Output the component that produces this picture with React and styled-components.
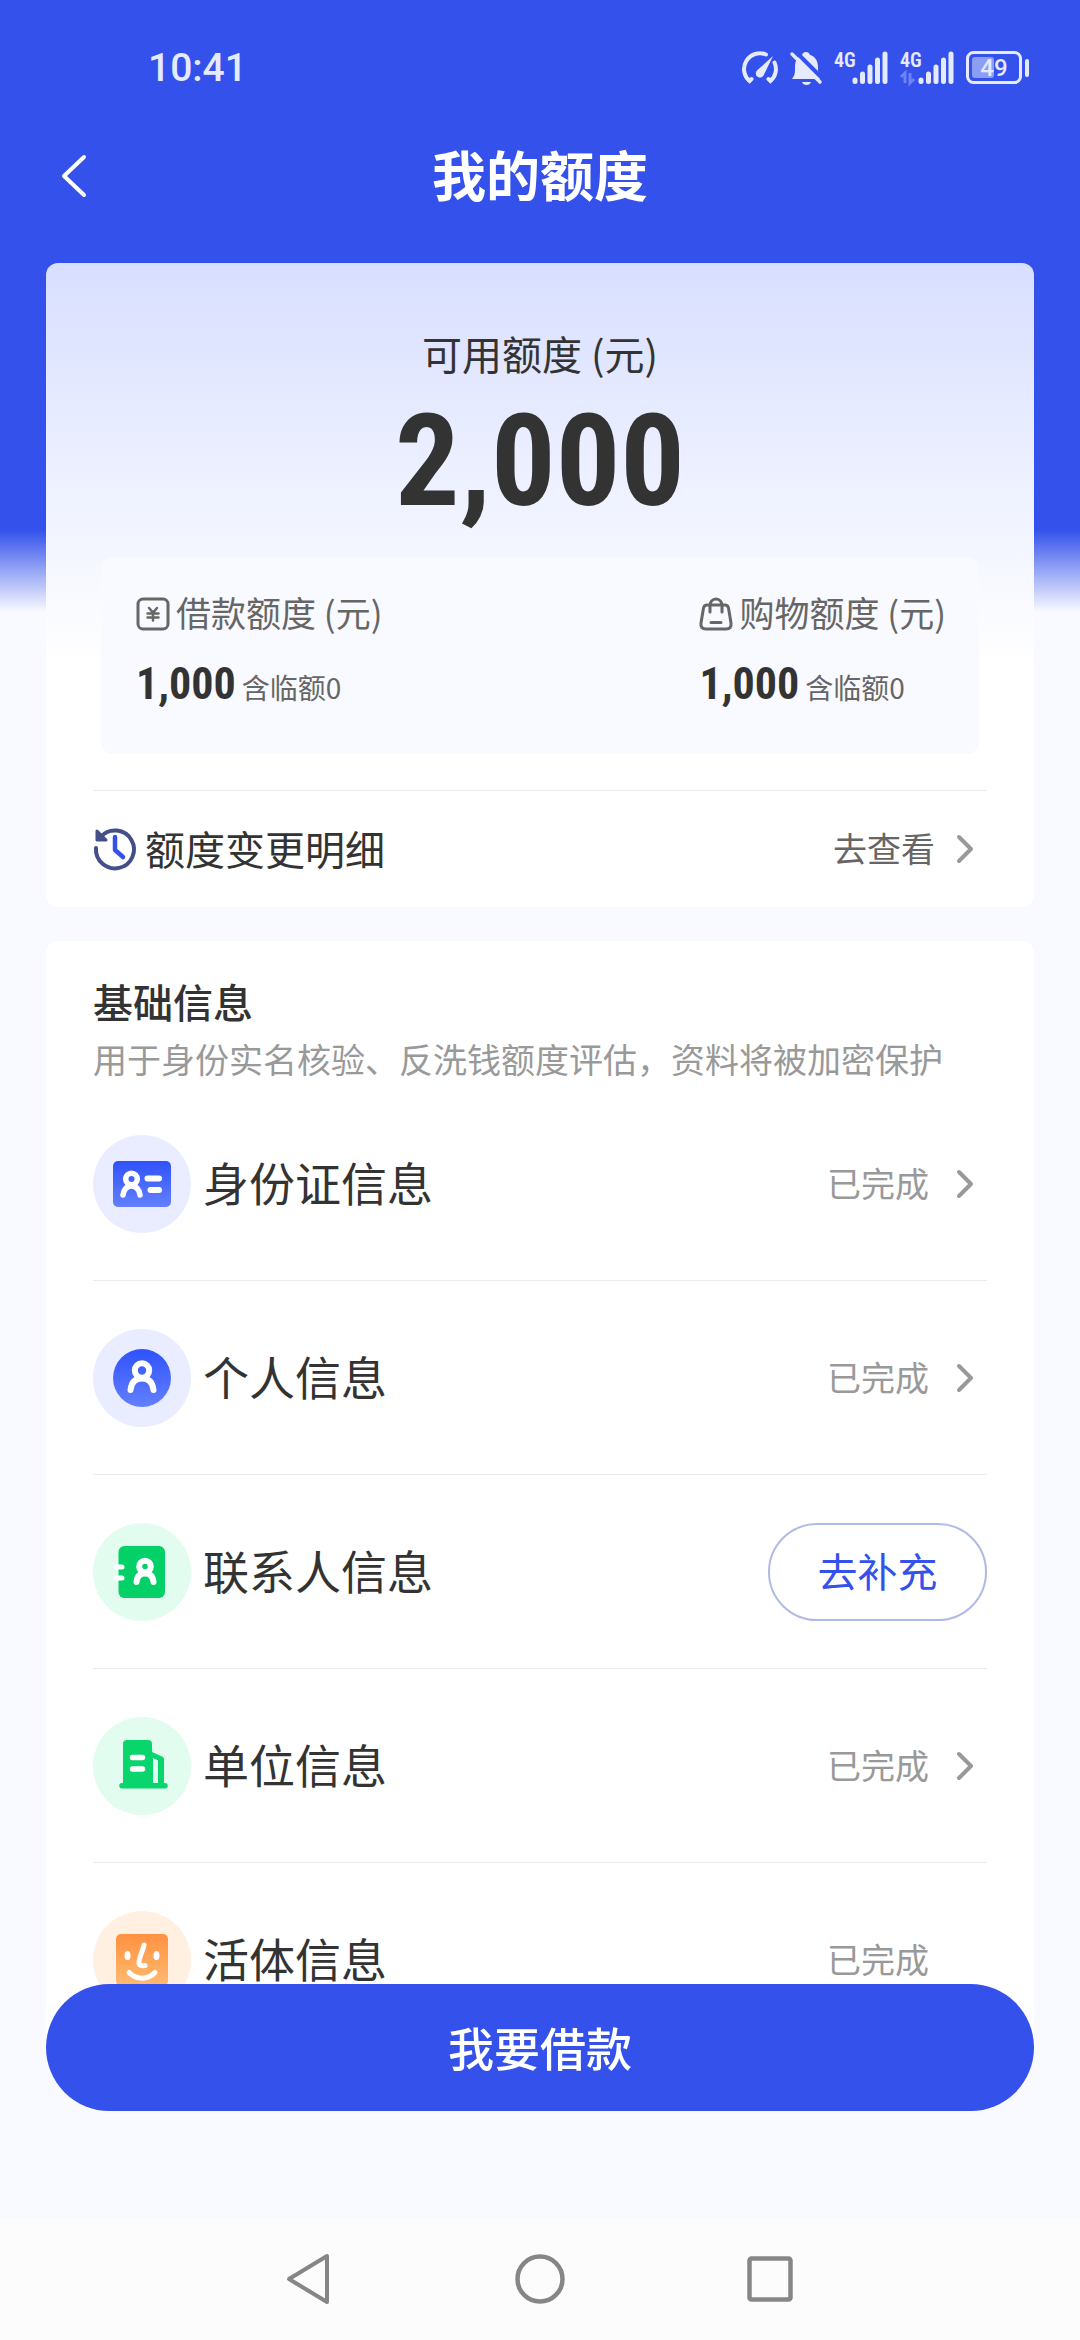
import styled, { createGlobalStyle } from 'styled-components';

const rows = [
  { id: 'idcard', title: '身份证信息', arrow: true },
  { id: 'person', title: '个人信息', arrow: true },
  { id: 'contact', title: '联系人信息', todo: true },
  { id: 'company', title: '单位信息', arrow: true },
  { id: 'face', title: '活体信息', arrow: false },
];

const Signal = ({ data }) => (
  <svg width='54' height='36' viewBox='0 0 54 36'>
    <text
      x='0'
      y='17'
      fill='#e6eaff'
      fontSize='20'
      fontWeight='600'
      fontFamily='Roboto Condensed, Liberation Sans Narrow, Roboto, sans-serif'
    >
      4G
    </text>
    {data && (
      <path
        d='M1 27l4-4v10M10 23v10l4-4'
        fill='none'
        stroke='#6d82f4'
        strokeWidth='3'
      />
    )}
    <path
      d='M21 30v1.5M28.5 24v7.5M36 17v14.5M43.5 10v21.5M51 4v27.5'
      stroke='#e6eaff'
      strokeWidth='5'
      strokeLinecap='round'
    />
  </svg>
);

const Chevron = () => (
  <svg width='24' height='32' viewBox='0 0 24 32'>
    <path
      d='M6 4l12 12L6 28'
      fill='none'
      stroke='#999'
      strokeWidth='4'
      strokeLinecap='round'
      strokeLinejoin='round'
    />
  </svg>
);

const RowIcon = ({ id }) => {
  if (id === 'idcard')
    return (
      <svg width='98' height='98' viewBox='0 0 98 98'>
        <defs>
          <linearGradient id='blue' x1='0' y1='0' x2='0' y2='1'>
            <stop offset='0' stopColor='#2f52fb' />
            <stop offset='1' stopColor='#6380ff' />
          </linearGradient>
        </defs>
        <circle cx='49' cy='49' r='49' fill='#e9edff' />
        <rect x='20' y='26' width='58' height='46' rx='5' fill='url(#blue)' />
        <g fill='none' stroke='#fff' strokeWidth='5.5' strokeLinecap='round'>
          <circle cx='38.5' cy='44' r='5.8' />
          <path d='M30 60c1-6 4-9 8.500-9s7.500 3 8.500 9' />
          <path d='M54.500 43.500H66M57.500 55H66' strokeWidth='6' />
        </g>
      </svg>
    );
  if (id === 'person')
    return (
      <svg width='98' height='98' viewBox='0 0 98 98'>
        <circle cx='49' cy='49' r='49' fill='#e9edff' />
        <circle cx='49' cy='49' r='29' fill='url(#blue)' />
        <g fill='none' stroke='#fff' strokeWidth='6' strokeLinecap='round'>
          <circle cx='49' cy='41.5' r='7.2' />
          <path d='M37.500 61c.8-8 5-11.500 11.500-11.500s10.700 3.500 11.500 11.500' />
        </g>
      </svg>
    );
  if (id === 'contact')
    return (
      <svg width='98' height='98' viewBox='0 0 98 98'>
        <circle cx='49' cy='49' r='49' fill='#e2fdef' />
        <rect x='25.5' y='23' width='46.5' height='52' rx='6' fill='#04d068' />
        <g fill='none' stroke='#fff' strokeWidth='6' strokeLinecap='round'>
          <path d='M23.500 44H29M23.500 55H29' strokeWidth='5' />
          <circle cx='52' cy='43.5' r='5.800' />
          <path d='M43.500 59c.6-6 3.500-8.500 8.500-8.500s7.900 2.500 8.500 8.500' />
        </g>
      </svg>
    );
  if (id === 'company')
    return (
      <svg width='98' height='98' viewBox='0 0 98 98'>
        <circle cx='49' cy='49' r='49' fill='#e2fdef' />
        <path
          d='M34 23h21a4 4 0 0 1 4 4v8l10 4.500a3 3 0 0 1 2 3V66h1a2.700 2.700 0 0 1 0 5.500H29a2.700 2.700 0 0 1 0-5.500h1V27a4 4 0 0 1 4-4z'
          fill='#08d56c'
        />
        <path d='M60 41l5 2.500V66h-5z' fill='#e2fdef' />
        <path
          d='M39.500 40.500h10M39.500 52h10'
          stroke='#fff'
          strokeWidth='5.5'
          strokeLinecap='round'
        />
      </svg>
    );
  return (
    <svg width='98' height='98' viewBox='0 0 98 98'>
      <defs>
        <linearGradient id='orange' x1='0' y1='0' x2='0' y2='1'>
          <stop offset='0' stopColor='#ff9142' />
          <stop offset='1' stopColor='#ffbb70' />
        </linearGradient>
      </defs>
      <circle cx='49' cy='49' r='49' fill='#fff0e2' />
      <rect x='23' y='23' width='52' height='52' rx='5' fill='url(#orange)' />
      <ellipse cx='34.5' cy='44.5' rx='3' ry='4.5' fill='#fff' />
      <ellipse cx='63.5' cy='44.5' rx='3' ry='4.5' fill='#fff' />
      <path
        d='M51 34c-1 6-5 12-5 18 0 2 2 3 6 2.500M36 61.500c7 7.500 19 7.500 26 0'
        fill='none'
        stroke='#fff'
        strokeWidth='5'
        strokeLinecap='round'
      />
    </svg>
  );
};

const App = () => {
  return (
    <>
      <GlobalStyle />
      <Page>
        <StatusBar>
          <span>10:41</span>
          <StatusIcons>
            <svg width='36' height='36' viewBox='0 0 36 36'>
              <g
                fill='none'
                stroke='#e6eaff'
                strokeWidth='4'
                strokeLinecap='round'
              >
                <path d='M24 4.500A15.800 15.800 0 0 0 7.500 31l2-2M32.500 12.500A15.800 15.800 0 0 1 28.500 31l-2-2' />
              </g>
              <path
                d='M31 6L22 24.500a4.200 4.200 0 1 1-6.500-4.500z'
                fill='#e6eaff'
              />
            </svg>
            <svg width='32' height='36' viewBox='0 0 32 36'>
              <path
                d='M2 29c2-2.500 3-5 3-9v-3C5 10 8 6 12 5c1-4 7-4 8 0 5 1 8 6 8 12 0 5 0 8 3 12zM12 32h9c-1 4-8 4-9 0z'
                fill='#e6eaff'
              />
              <path d='M4 0l28 28' stroke='#3452eb' strokeWidth='4' />
              <path
                d='M2 4l28 28'
                stroke='#e6eaff'
                strokeWidth='3.5'
                strokeLinecap='round'
              />
            </svg>
            <Signal />
            <Signal data />
            <svg width='64' height='36' viewBox='0 0 64 36'>
              <rect
                x='1.5'
                y='2.500'
                width='53'
                height='30'
                rx='6'
                fill='none'
                stroke='#e6eaff'
                strokeWidth='3'
              />
              <rect x='6' y='7' width='22' height='21' rx='3' fill='#8c9df5' />
              <rect x='59' y='9' width='4' height='18' rx='2' fill='#e6eaff' />
              <text
                x='28'
                y='26'
                textAnchor='middle'
                fill='#e6eaff'
                fontSize='24'
                fontWeight='500'
                fontFamily='Roboto, sans-serif'
              >
                49
              </text>
            </svg>
          </StatusIcons>
        </StatusBar>
        <Header>
          <BackButton aria-label='返回'>
            <svg width='28' height='48' viewBox='0 0 28 48'>
              <path
                d='M24 5L4 24l20 19'
                fill='none'
                stroke='#fff'
                strokeWidth='4'
                strokeLinecap='round'
                strokeLinejoin='round'
              />
            </svg>
          </BackButton>
          <h1>我的额度</h1>
        </Header>
        <Main>
          <QuotaCard>
            <QuotaLabel>可用额度 (元)</QuotaLabel>
            <QuotaTotal>2,000</QuotaTotal>
            <QuotaSplit>
              <div>
                <SplitLabel>
                  <svg width='34' height='34' viewBox='0 0 34 34'>
                    <g
                      fill='none'
                      stroke='#666'
                      strokeWidth='3'
                      strokeLinecap='round'
                    >
                      <rect x='2' y='2' width='30' height='30' rx='5' />
                      <path
                        d='M13 11l4 4.500 4-4.500M11.500 16.500h11M11.500 20.500h11M17 16v7.500'
                        strokeWidth='2.5'
                      />
                    </g>
                  </svg>
                  <span>借款额度 (元)</span>
                </SplitLabel>
                <SplitValue>
                  <strong>1,000</strong>
                  <span>含临额0</span>
                </SplitValue>
              </div>
              <div>
                <SplitLabel>
                  <svg width='34' height='34' viewBox='0 0 34 34'>
                    <path
                      d='M8 8h18c2 0 3 1 3.500 3L32 26c.5 4-1 6-5 6H7c-4 0-5.500-2-5-6L4.500 11C5 9 6 8 8 8zM11 15V9c0-4 2.500-7 6-7s6 3 6 7v6M12 25.500h10'
                      fill='none'
                      stroke='#666'
                      strokeWidth='3'
                      strokeLinecap='round'
                    />
                  </svg>
                  <span>购物额度 (元)</span>
                </SplitLabel>
                <SplitValue>
                  <strong>1,000</strong>
                  <span>含临额0</span>
                </SplitValue>
              </div>
            </QuotaSplit>
            <HistoryRow>
              <svg width='44' height='46' viewBox='0 0 44 46'>
                <path
                  d='M3 22a19 19 0 1 0 5-11.500'
                  fill='none'
                  stroke='#444f8a'
                  strokeWidth='4'
                  strokeLinecap='round'
                />
                <path
                  d='M4 5v9h9z'
                  fill='#444f8a'
                  stroke='#444f8a'
                  strokeWidth='3'
                  strokeLinejoin='round'
                />
                <path
                  d='M22 11v13l8 7'
                  fill='none'
                  stroke='#3452eb'
                  strokeWidth='4.5'
                  strokeLinecap='round'
                  strokeLinejoin='round'
                />
              </svg>
              <h2>额度变更明细</h2>
              <StatusLink href='#history' $color='#666' $gap='18px'>
                <span>去查看</span>
                <Chevron />
              </StatusLink>
            </HistoryRow>
          </QuotaCard>
          <InfoCard>
            <h2>基础信息</h2>
            <p>用于身份实名核验、反洗钱额度评估，资料将被加密保护</p>
            <ul>
              {rows.map((row) => (
                <InfoRow key={row.id}>
                  <RowIcon id={row.id} />
                  <h3>{row.title}</h3>
                  {row.todo ? (
                    <FillButton>去补充</FillButton>
                  ) : (
                    <StatusLink
                      href={`#${row.id}`}
                      $color='#999'
                      $gap='24px'
                      $noArrow={!row.arrow}
                    >
                      <span>已完成</span>
                      <Chevron />
                    </StatusLink>
                  )}
                </InfoRow>
              ))}
            </ul>
          </InfoCard>
        </Main>
        <Dock>
          <BorrowButton>我要借款</BorrowButton>
          <NavBar>
            <button aria-label='后退'>
              <svg width='50' height='54' viewBox='0 0 50 54'>
                <path
                  d='M43 4v46L5 27z'
                  fill='none'
                  stroke='#868686'
                  strokeWidth='4'
                  strokeLinejoin='round'
                />
              </svg>
            </button>
            <button aria-label='主屏幕'>
              <svg width='54' height='54' viewBox='0 0 54 54'>
                <circle
                  cx='27'
                  cy='27'
                  r='22.5'
                  fill='none'
                  stroke='#868686'
                  strokeWidth='4.5'
                />
              </svg>
            </button>
            <button aria-label='最近任务'>
              <svg width='50' height='54' viewBox='0 0 50 54'>
                <rect
                  x='3.500'
                  y='6.500'
                  width='41'
                  height='41'
                  rx='2'
                  fill='none'
                  stroke='#868686'
                  strokeWidth='4.5'
                />
              </svg>
            </button>
          </NavBar>
        </Dock>
      </Page>
    </>
  );
};

const GlobalStyle = createGlobalStyle`
  * {
    box-sizing: border-box;
    margin: 0;
    padding: 0;
  }
  body {
    background: #f9faff;
    color: #333;
    font-family: 'Noto Sans CJK SC', sans-serif;
  }
  button {
    border: none;
    background: none;
    font-family: inherit;
  }
  svg {
    flex: none;
    display: block;
    overflow: visible;
  }
`;

const Page = styled.div`
  min-height: 100vh;
  padding-bottom: 240px;
  background: linear-gradient(#3452eb 530px, #f9faff 612px);
`;

const StatusBar = styled.div`
  height: 118px;
  padding: 18px 50px 0 148px;
  display: flex;
  align-items: center;
  justify-content: space-between;
  color: #e6eaff;
  font-family: Roboto, sans-serif;
  font-size: 39px;
  font-weight: 500;
`;

const StatusIcons = styled.div`
  display: flex;
  align-items: center;
  gap: 12px;
`;

const Header = styled.header`
  height: 116px;
  padding: 0 60px;
  display: grid;
  grid-template-columns: 1fr auto 1fr;
  align-items: center;
  color: #fff;
  h1 {
    padding-bottom: 4px;
    font-size: 54px;
    line-height: 64px;
    font-weight: 700;
  }
`;

const BackButton = styled.button`
  justify-self: start;
`;

const Main = styled.main`
  margin-top: 29px;
  padding: 0 46px;
  display: grid;
  gap: 34px;
`;

const QuotaCard = styled.section`
  padding: 66px 47px 0;
  border-radius: 12px;
  background: linear-gradient(#d8dfff, #fff 400px);
`;

const QuotaLabel = styled.p`
  font-size: 40px;
  line-height: 48px;
  text-align: center;
`;

const QuotaTotal = styled.p`
  margin-top: 34px;
  font-family: 'Roboto Condensed', 'Liberation Sans Narrow', Roboto, sans-serif;
  font-size: 128px;
  line-height: 100px;
  font-weight: 700;
  text-align: center;
`;

const QuotaSplit = styled.div`
  margin: 46px 8px 0;
  padding: 31px 33px 46px 35px;
  display: flex;
  justify-content: space-between;
  border-radius: 12px;
  background: #f9faff;
`;

const SplitLabel = styled.p`
  display: flex;
  align-items: center;
  gap: 6px;
  color: #666;
  font-size: 35px;
  line-height: 48px;
  span {
    padding-bottom: 4px;
  }
`;

const SplitValue = styled.p`
  height: 48px;
  margin-top: 20px;
  display: flex;
  align-items: baseline;
  gap: 6px;
  line-height: 48px;
  strong {
    font-family: 'Roboto Condensed', 'Liberation Sans Narrow', Roboto,
      sans-serif;
    font-size: 44px;
    font-weight: 700;
  }
  span {
    color: #666;
    font-size: 28px;
  }
`;

const HistoryRow = styled.div`
  height: 117px;
  margin-top: 36px;
  display: flex;
  align-items: center;
  border-top: 1px solid #ebebeb;
  h2 {
    flex: 1;
    margin-left: 8px;
    padding-bottom: 2px;
    font-size: 40px;
    line-height: 48px;
    font-weight: 400;
  }
`;

const StatusLink = styled.a`
  padding-right: 10px;
  display: flex;
  align-items: center;
  gap: ${(props) => props.$gap};
  color: ${(props) => props.$color};
  font-size: 34px;
  line-height: 48px;
  text-decoration: none;
  span {
    padding-bottom: 2px;
  }
  svg {
    visibility: ${(props) => (props.$noArrow ? 'hidden' : 'visible')};
  }
`;

const InfoCard = styled.section`
  padding: 36px 47px 0;
  border-radius: 12px;
  background: #fff;
  h2 {
    font-size: 40px;
    line-height: 48px;
    font-weight: 500;
  }
  p {
    margin: 12px 0 6px;
    color: #999;
    font-size: 34px;
    line-height: 44px;
    white-space: nowrap;
  }
`;

const InfoRow = styled.li`
  padding: 48px 0 47px;
  display: flex;
  align-items: center;
  list-style: none;
  border-bottom: 1px solid #ebebeb;
  &:last-child {
    border-bottom: none;
  }
  h3 {
    flex: 1;
    margin-left: 12px;
    padding-bottom: 6px;
    font-size: 46px;
    line-height: 56px;
    font-weight: 400;
  }
`;

const FillButton = styled.button`
  width: 219px;
  height: 98px;
  padding-bottom: 4px;
  border: 2px solid #b0bae6;
  border-radius: 49px;
  color: #3452eb;
  font-size: 40px;
`;

const Dock = styled.footer`
  position: fixed;
  right: 0;
  bottom: 0;
  left: 0;
`;

const BorrowButton = styled.button`
  display: block;
  width: calc(100% - 92px);
  height: 127px;
  margin: 0 46px 107px;
  padding-bottom: 4px;
  border-radius: 64px;
  background: #3452eb;
  color: #fff;
  font-size: 46px;
  font-weight: 500;
`;

const NavBar = styled.nav`
  height: 122px;
  padding: 0 194px;
  display: grid;
  grid-template-columns: repeat(3, 1fr);
  align-items: center;
  background: #fcfcfc;
  button {
    justify-self: center;
  }
`;

export default App;
